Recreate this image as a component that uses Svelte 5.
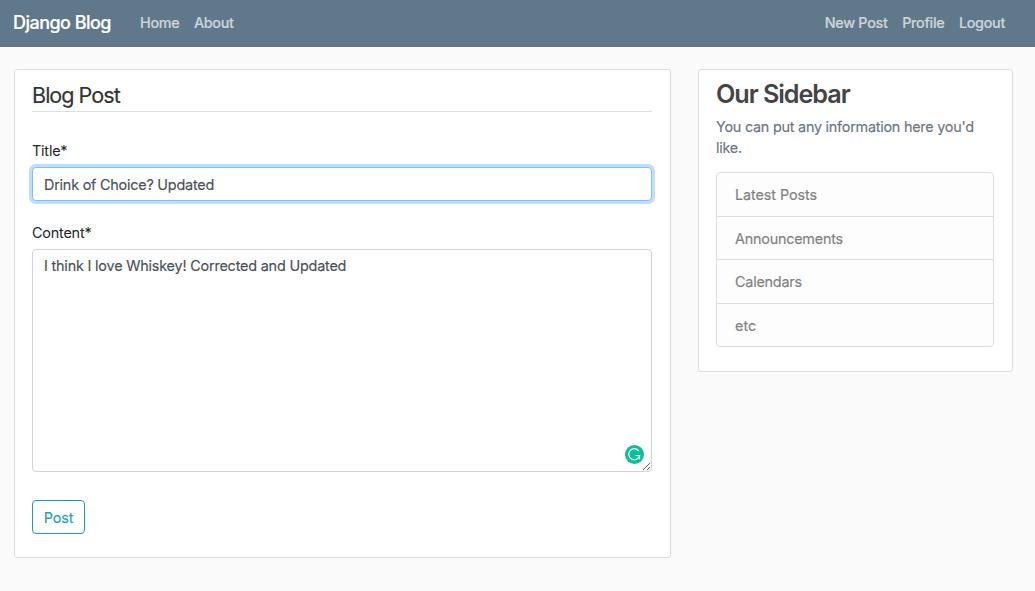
<script>
  const links = ['Home', 'About'];
  const account = ['New Post', 'Profile', 'Logout'];
  const items = ['Latest Posts', 'Announcements', 'Calendars', 'etc'];
  let title = $state('Drink of Choice? Updated');
  let content = $state('I think I love Whiskey! Corrected and Updated');
</script>

<header>
  <a class="brand" href="#home">Django Blog</a>
  <nav class="links">
    {#each links as link}<a href="#{link}">{link}</a>{/each}
  </nav>
  <nav class="account">
    {#each account as link}<a href="#{link}">{link}</a>{/each}
  </nav>
</header>

<main>
  <form class="card post" onsubmit={(e) => e.preventDefault()}>
    <h1>Blog Post</h1>
    <label for="title">Title*</label>
    <input id="title" type="text" bind:value={title} />
    <label class="second" for="content">Content*</label>
    <div class="area">
      <textarea id="content" spellcheck="false" bind:value={content}></textarea>
      <svg class="checker" viewBox="0 0 20 20" aria-hidden="true">
        <circle cx="10.5" cy="10.5" r="9.5" fill="#0bbf98" />
        <path d="M14.4 6.6A5.5 5.5 0 1 0 15.6 11.5" fill="none" stroke="#fff" stroke-width="1.2" stroke-linecap="round" />
        <path d="M11.5 11.5H15.5V15.3" fill="none" stroke="#fff" stroke-width="1.2" />
      </svg>
    </div>
    <button type="submit">Post</button>
  </form>

  <aside class="card side">
    <h2>Our Sidebar</h2>
    <p>You can put any information here you'd like.</p>
    <ul>
      {#each items as item}<li>{item}</li>{/each}
    </ul>
  </aside>
</main>

<style>
  :global(body) {
    margin: 0;
    background: #fafafa;
    color: #333;
    font: 14.4px/21px Inter, "Liberation Sans", sans-serif;
  }
  header, main, header :global(*), main :global(*) { box-sizing: border-box; }
  header {
    display: flex;
    align-items: center;
    height: 47px;
    padding: 0 30px 2px 13px;
    background: #5f788a;
  }
  a { color: #cbd5db; text-decoration: none; white-space: nowrap; -webkit-text-stroke: 0.2px currentColor; }
  .brand {
    width: 127px;
    color: #fff;
    font-size: 18px;
    font-weight: 500;
    letter-spacing: -0.53px;
  }
  nav { display: flex; gap: 14.6px; font-weight: 500; letter-spacing: -0.34px; }
  .account { margin-left: auto; letter-spacing: -0.32px; }
  main {
    display: flex;
    align-items: flex-start;
    gap: 27px;
    padding: 22px 22px 0 14px;
  }
  .card {
    background: #fff;
    border: 1px solid #ddd;
    border-radius: 3px;
  }
  .post {
    display: flex;
    flex-direction: column;
    width: 657px;
    height: 489px;
    padding: 9px 18px 0 17px;
  }
  h1 {
    height: 33px;
    margin: 0 0 28px;
    border-bottom: 1px solid #dfdfdf;
    color: #333;
    font-size: 21.6px;
    font-weight: 400;
    line-height: 32px;
    letter-spacing: -1px;
    -webkit-text-stroke: 0.15px currentColor;
  }
  label {
    height: 27px;
    color: #212529;
    letter-spacing: -0.2px;
  }
  .second { margin-top: 21px; }
  input, textarea {
    display: block;
    width: 100%;
    margin: 0;
    padding: 0 11px;
    border: 1px solid #ced4da;
    border-radius: 4px;
    outline: none;
    background: #fff;
    color: #495057;
    font: inherit;
    letter-spacing: -0.22px;
  }
  input, textarea, p, li, button { -webkit-text-stroke: 0.15px currentColor; }
  input {
    height: 34px;
    border-color: #80bdff;
    box-shadow: 0 0 0 3px #bfdeff;
  }
  .area { position: relative; height: 223px; }
  textarea { height: 223px; padding-top: 5px; letter-spacing: -0.19px; resize: vertical; }
  .checker {
    position: absolute;
    right: 8px;
    bottom: 8px;
    width: 20px;
    height: 20px;
  }
  button {
    width: 53px;
    height: 34px;
    margin-top: 28px;
    padding: 1px 0 0;
    border: 1px solid #17a2b8;
    border-radius: 4px;
    background: transparent;
    color: #17a2b8;
    font: inherit;
    letter-spacing: -0.15px;
  }
  .side {
    width: 315px;
    height: 303px;
    padding: 9px 18px 0 17px;
  }
  h2 {
    margin: 0 0 6px;
    color: #444;
    font-size: 25.2px;
    font-weight: 600;
    line-height: 31px;
    letter-spacing: -1.05px;
  }
  p { margin: 0 0 14px; color: #6c757d; letter-spacing: -0.24px; }
  ul {
    display: grid;
    grid-template-rows: repeat(4, 43.5px);
    height: 175px;
    margin: 0;
    padding: 0;
    overflow: hidden;
    border: 1px solid #ddd;
    border-radius: 4px;
    background: #fdfdfd;
    list-style: none;
  }
  li {
    padding: 11px 18px;
    border-bottom: 1px solid #ddd;
    color: #818182;
    letter-spacing: -0.23px;
  }
  li:first-child { letter-spacing: -0.08px; }
  li:last-child { border-bottom: 0; letter-spacing: 0; }
</style>
